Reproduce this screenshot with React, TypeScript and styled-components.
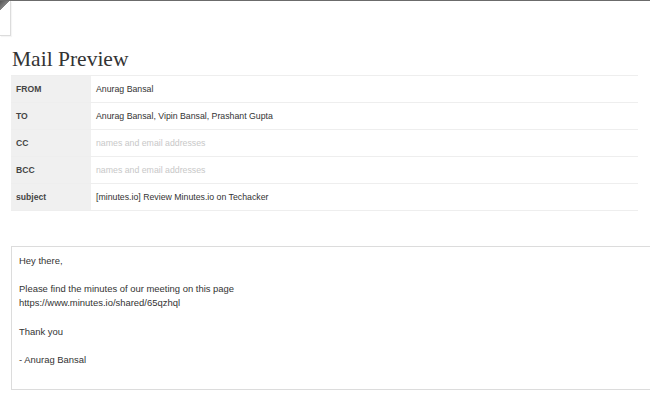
import React from 'react';
import styled, { createGlobalStyle } from 'styled-components';

type Field = {
    label: string;
    value: string;
    placeholder?: boolean;
};

const fields: Field[] = [
    { label: 'FROM', value: 'Anurag Bansal' },
    { label: 'TO', value: 'Anurag Bansal, Vipin Bansal, Prashant Gupta' },
    { label: 'CC', value: 'names and email addresses', placeholder: true },
    { label: 'BCC', value: 'names and email addresses', placeholder: true },
    { label: 'subject', value: '[minutes.io] Review Minutes.io on Techacker' },
];

const bodyLines = [
    'Hey there,',
    '',
    'Please find the minutes of our meeting on this page',
    'https://www.minutes.io/shared/65qzhql',
    '',
    'Thank you',
    '',
    '- Anurag Bansal',
];

const GlobalStyle = createGlobalStyle`
    html, body {
        margin: 0;
        padding: 0;
        background: #fff;
    }
    body {
        font-family: 'Liberation Sans', Arial, sans-serif;
        overflow: hidden;
    }
`;

const App: React.FC = () => {
    return (
        <>
            <GlobalStyle />
            <Page>
                <Fold />
                <Content>
                    <Title>Mail Preview</Title>
                    <FieldTable>
                        {fields.map((field) => (
                            <FieldRow key={field.label}>
                                <FieldLabel>{field.label}</FieldLabel>
                                <FieldValue muted={field.placeholder}>{field.value}</FieldValue>
                            </FieldRow>
                        ))}
                    </FieldTable>
                    <MessageBox>
                        {bodyLines.map((line, index) => (
                            <MessageLine key={index}>{line || '\u00a0'}</MessageLine>
                        ))}
                    </MessageBox>
                </Content>
            </Page>
        </>
    );
};

const Page = styled.div`
    width: 650px;
    height: 400px;
    border-top: 1px solid #6b6b6b;
    box-sizing: border-box;
    overflow: hidden;
`;

const Fold = styled.div`
    position: relative;
    width: 10px;
    height: 34px;
    border-right: 1px solid #dcdcdc;
    border-bottom: 1px solid #dcdcdc;
    box-shadow: 1px 1px 1px rgba(0, 0, 0, 0.04);
    &::before {
        content: '';
        position: absolute;
        top: 0;
        left: 0;
        width: 10px;
        height: 10px;
        background: linear-gradient(135deg, #555 0%, #888 50%, transparent 50%);
    }
`;

const Content = styled.div`
    padding: 0 0 0 11px;
`;

const Title = styled.h1`
    margin: 11px 0 4px 1px;
    font-family: 'Liberation Serif', 'Times New Roman', serif;
    font-weight: 400;
    font-size: 21.5px;
    line-height: 24px;
    color: #333;
`;

const FieldTable = styled.div`
    width: 627px;
    border-top: 1px solid #eee;
`;

const FieldRow = styled.div`
    display: flex;
    height: 26px;
    border-bottom: 1px solid #eee;
    line-height: 26px;
`;

const FieldLabel = styled.div`
    width: 75px;
    padding-left: 5px;
    background: #f0f0f0;
    font-size: 8.6px;
    font-weight: 700;
    color: #444;
`;

const FieldValue = styled.div<{ muted?: boolean }>`
    flex: 1;
    padding-left: 5px;
    font-size: 8.75px;
    color: ${(props) => (props.muted ? '#c8c8c8' : '#333')};
`;

const MessageBox = styled.div`
    margin-top: 35px;
    width: 660px;
    height: 144px;
    box-sizing: border-box;
    border: 1px solid #dcdcdc;
    padding: 7px 7px;
`;

const MessageLine = styled.div`
    font-size: 9.45px;
    line-height: 14.15px;
    color: #333;
    white-space: pre;
`;

export default App;
